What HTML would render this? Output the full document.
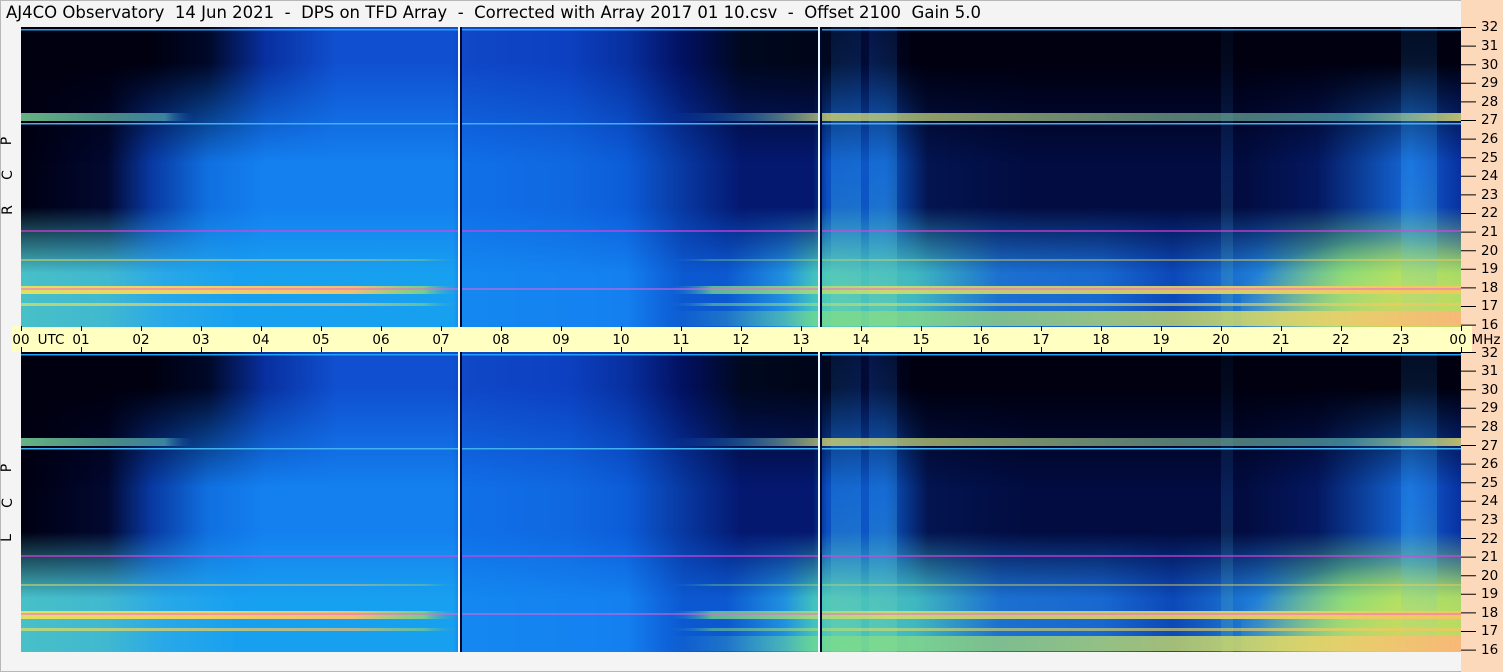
<!DOCTYPE html>
<html><head><meta charset="utf-8"><style>
html,body{margin:0;padding:0}
body{width:1503px;height:672px;overflow:hidden;background:#f4f4f4;position:relative;font-family:"DejaVu Sans","Liberation Sans",sans-serif}
#frame{position:absolute;left:0;top:0;width:1501px;height:670px;border:1px solid #b8b8b8}
#title{position:absolute;left:6px;top:3px;font-size:16.5px;color:#000;white-space:pre;letter-spacing:0}
#peach{position:absolute;left:1461px;top:0;width:42px;height:672px;background:#fdd9bc}
#axis{position:absolute;left:12px;top:326px;width:1460px;height:26px;background:#ffffc2}
.hl{position:absolute;top:332px;font-size:13.5px;color:#000;transform:translateX(-50%)}
.fl{position:absolute;left:1481px;font-size:13.5px;color:#000;transform:translateY(-50%)}
.side{position:absolute;left:3px;font-size:14px;color:#000;transform:rotate(-90deg);transform-origin:center}
svg{position:absolute;left:0;top:0}
</style></head><body>
<div id="frame"></div>
<div id="peach"></div>
<div id="axis"></div>
<div id="title">AJ4CO Observatory  14 Jun 2021  -  DPS on TFD Array  -  Corrected with Array 2017 01 10.csv  -  Offset 2100  Gain 5.0</div>
<svg width="1503" height="672" viewBox="0 0 1503 672">
<defs>
<linearGradient id="gb" x1="0" x2="1" y1="0" y2="0">
<stop offset="0" stop-color="#48c0c8"/><stop offset="0.06" stop-color="#40b8d0"/><stop offset="0.1" stop-color="#28a8e8"/>
<stop offset="0.15" stop-color="#18a0f0"/><stop offset="0.3" stop-color="#18a0f0"/><stop offset="0.305" stop-color="#1488f0"/>
<stop offset="0.42" stop-color="#1480f0"/><stop offset="0.46" stop-color="#0c58d0"/><stop offset="0.49" stop-color="#0c58d0"/>
<stop offset="0.53" stop-color="#2090e0"/><stop offset="0.55" stop-color="#40c0c0"/><stop offset="0.56" stop-color="#50c8b8"/>
<stop offset="0.62" stop-color="#40b8c0"/><stop offset="0.68" stop-color="#1c70d0"/><stop offset="0.75" stop-color="#1868d0"/>
<stop offset="0.8" stop-color="#0c48b8"/><stop offset="0.86" stop-color="#2080d8"/><stop offset="0.92" stop-color="#70d880"/>
<stop offset="0.96" stop-color="#a0e060"/><stop offset="1" stop-color="#98d868"/>
</linearGradient>
<linearGradient id="gm" x1="0" x2="1" y1="0" y2="0">
<stop offset="0" stop-color="#000012"/><stop offset="0.06" stop-color="#020830"/><stop offset="0.09" stop-color="#0838a0"/>
<stop offset="0.13" stop-color="#1070e0"/><stop offset="0.17" stop-color="#1480f0"/><stop offset="0.3" stop-color="#1480f0"/>
<stop offset="0.305" stop-color="#1070e8"/><stop offset="0.38" stop-color="#1068e0"/><stop offset="0.42" stop-color="#0c5cd8"/>
<stop offset="0.46" stop-color="#0838a0"/><stop offset="0.5" stop-color="#041870"/><stop offset="0.55" stop-color="#041870"/>
<stop offset="0.56" stop-color="#0a50c0"/><stop offset="0.6" stop-color="#0c58c8"/><stop offset="0.63" stop-color="#031450"/>
<stop offset="0.7" stop-color="#020c40"/><stop offset="0.85" stop-color="#020c40"/><stop offset="0.9" stop-color="#041860"/>
<stop offset="0.965" stop-color="#1468d8"/><stop offset="1" stop-color="#0830a0"/>
</linearGradient>
<linearGradient id="gt" x1="0" x2="1" y1="0" y2="0">
<stop offset="0" stop-color="#000010"/><stop offset="0.09" stop-color="#000010"/><stop offset="0.13" stop-color="#000828"/>
<stop offset="0.17" stop-color="#0830a0"/><stop offset="0.22" stop-color="#1050d0"/><stop offset="0.3" stop-color="#1050d0"/>
<stop offset="0.305" stop-color="#1048c8"/><stop offset="0.38" stop-color="#0c40c0"/><stop offset="0.42" stop-color="#0830a0"/>
<stop offset="0.46" stop-color="#021060"/><stop offset="0.5" stop-color="#000820"/><stop offset="0.55" stop-color="#000618"/>
<stop offset="0.59" stop-color="#020a38"/><stop offset="0.62" stop-color="#000010"/><stop offset="1" stop-color="#000010"/>
</linearGradient>
<linearGradient id="vm" x1="0" x2="0" y1="0" y2="1">
<stop offset="0" stop-color="#fff"/><stop offset="0.6" stop-color="#fff"/><stop offset="0.82" stop-color="#000"/>
</linearGradient>
<linearGradient id="vt" x1="0" x2="0" y1="0" y2="1">
<stop offset="0" stop-color="#fff"/><stop offset="0.12" stop-color="#fff"/><stop offset="0.45" stop-color="#000"/>
</linearGradient>
<mask id="mm"><rect width="1440" height="300" fill="url(#vm)"/></mask>
<mask id="mt"><rect width="1440" height="300" fill="url(#vt)"/></mask>
<linearGradient id="s27" x1="0" x2="1">
<stop offset="0" stop-color="#80e0a0" stop-opacity="0.8"/><stop offset="0.1" stop-color="#60c0c0" stop-opacity="0.6"/><stop offset="0.12" stop-color="#1060d0" stop-opacity="0"/>
<stop offset="0.45" stop-color="#1060d0" stop-opacity="0"/><stop offset="0.5" stop-color="#40a0e0" stop-opacity="0.4"/>
<stop offset="0.56" stop-color="#e0e070" stop-opacity="0.75"/><stop offset="0.8" stop-color="#90c8a0" stop-opacity="0.6"/><stop offset="0.92" stop-color="#60c0c0" stop-opacity="0.6"/><stop offset="1" stop-color="#e8e070" stop-opacity="0.8"/>
</linearGradient>
<linearGradient id="s18" x1="0" x2="1">
<stop offset="0" stop-color="#e0e060"/><stop offset="0.13" stop-color="#f0d060"/><stop offset="0.23" stop-color="#f0c070"/><stop offset="0.28" stop-color="#a0e060" stop-opacity="0.7"/>
<stop offset="0.31" stop-color="#1080f0" stop-opacity="0"/><stop offset="0.45" stop-color="#1080f0" stop-opacity="0"/><stop offset="0.48" stop-color="#80e080" stop-opacity="0.7"/>
<stop offset="0.6" stop-color="#e0e060" stop-opacity="0.8"/><stop offset="1" stop-color="#f0c860"/>
</linearGradient>
<linearGradient id="s16" x1="0" x2="1">
<stop offset="0" stop-color="#40c0d0" stop-opacity="0"/><stop offset="0.45" stop-color="#40c0d0" stop-opacity="0"/><stop offset="0.55" stop-color="#80e080" stop-opacity="0.6"/>
<stop offset="0.85" stop-color="#e0e060" stop-opacity="0.8"/><stop offset="1" stop-color="#f8b878"/>
</linearGradient>
<linearGradient id="col" x1="0" x2="0" y1="0" y2="1">
<stop offset="0" stop-color="#2080e0" stop-opacity="0.1"/><stop offset="0.5" stop-color="#30a0f0" stop-opacity="0.3"/><stop offset="1" stop-color="#80e0a0" stop-opacity="0.35"/>
</linearGradient>
<radialGradient id="yb" cx="0.7" cy="1" r="0.8">
<stop offset="0" stop-color="#f0c860" stop-opacity="0.7"/><stop offset="0.5" stop-color="#e0e060" stop-opacity="0.4"/><stop offset="1" stop-color="#e0e060" stop-opacity="0"/>
</radialGradient>
<g id="p">
<rect width="1440" height="300" fill="url(#gb)"/>
<rect width="1440" height="300" fill="url(#gm)" mask="url(#mm)"/>
<rect width="1440" height="300" fill="url(#gt)" mask="url(#mt)"/>
<rect x="810" width="30" height="300" fill="url(#col)"/>
<rect x="848" width="28" height="300" fill="url(#col)"/>
<rect x="1380" width="36" height="300" fill="url(#col)"/>
<rect x="1200" y="0" width="12" height="300" fill="url(#col)" opacity="0.5"/>
<rect x="0" y="2" width="1440" height="1.5" fill="#20a0f0"/>
<rect x="0" y="86" width="1440" height="8" fill="url(#s27)"/>
<rect x="0" y="96" width="1440" height="1.5" fill="#40b0f0"/>
<rect x="0" y="203" width="1440" height="2" fill="#e040e0" opacity="0.6"/>
<rect x="1220" y="190" width="220" height="110" fill="url(#yb)"/>
<rect x="0" y="259" width="1440" height="8" fill="url(#s18)"/>
<rect x="0" y="261" width="1440" height="2" fill="#f060e0" opacity="0.5"/>
<rect x="0" y="276" width="1440" height="3" fill="url(#s18)" opacity="0.7"/>
<rect x="0" y="284" width="1440" height="15" fill="url(#s16)"/>
<rect x="0" y="232" width="1440" height="2" fill="url(#s18)" opacity="0.5"/>
<rect x="437" width="2" height="300" fill="#f0f8ff"/>
<rect x="439" width="2" height="300" fill="#000830"/>
<rect x="797" width="2" height="300" fill="#e8f8ff"/>
<rect x="799" width="2" height="300" fill="#000830"/>
</g>
</defs>
<use href="#p" x="21" y="27"/>
<use href="#p" x="21" y="352"/>
<g stroke="#000" stroke-width="1">
<path d="M21.5 326v5M81.5 326v5M141.5 326v5M201.5 326v5M261.5 326v5M321.5 326v5M381.5 326v5M441.5 326v5M501.5 326v5M561.5 326v5M621.5 326v5M681.5 326v5M741.5 326v5M801.5 326v5M861.5 326v5M921.5 326v5M981.5 326v5M1041.5 326v5M1101.5 326v5M1161.5 326v5M1221.5 326v5M1281.5 326v5M1341.5 326v5M1401.5 326v5M1461.5 326v5"/>
<path d="M21.5 347v5M81.5 347v5M141.5 347v5M201.5 347v5M261.5 347v5M321.5 347v5M381.5 347v5M441.5 347v5M501.5 347v5M561.5 347v5M621.5 347v5M681.5 347v5M741.5 347v5M801.5 347v5M861.5 347v5M921.5 347v5M981.5 347v5M1041.5 347v5M1101.5 347v5M1161.5 347v5M1221.5 347v5M1281.5 347v5M1341.5 347v5M1401.5 347v5M1461.5 347v5"/>
<path d="M1461 27.5h15M1461 46.1h15M1461 64.7h15M1461 83.3h15M1461 101.9h15M1461 120.5h15M1461 139.1h15M1461 157.7h15M1461 176.3h15M1461 194.9h15M1461 213.5h15M1461 232.1h15M1461 250.7h15M1461 269.3h15M1461 287.9h15M1461 306.5h15M1461 325.1h15"/>
<path d="M1461 352.5h15M1461 371.1h15M1461 389.7h15M1461 408.3h15M1461 426.9h15M1461 445.5h15M1461 464.1h15M1461 482.7h15M1461 501.3h15M1461 519.9h15M1461 538.5h15M1461 557.1h15M1461 575.7h15M1461 594.3h15M1461 612.9h15M1461 631.5h15M1461 650.1h15"/>
</g>
</svg>
<div class="hl" style="left:21px">00</div><div class="hl" style="left:51px">UTC</div>
<div class="hl" style="left:81px">01</div><div class="hl" style="left:141px">02</div><div class="hl" style="left:201px">03</div><div class="hl" style="left:261px">04</div><div class="hl" style="left:321px">05</div><div class="hl" style="left:381px">06</div><div class="hl" style="left:441px">07</div><div class="hl" style="left:501px">08</div><div class="hl" style="left:561px">09</div><div class="hl" style="left:621px">10</div><div class="hl" style="left:681px">11</div><div class="hl" style="left:741px">12</div><div class="hl" style="left:801px">13</div><div class="hl" style="left:861px">14</div><div class="hl" style="left:921px">15</div><div class="hl" style="left:981px">16</div><div class="hl" style="left:1041px">17</div><div class="hl" style="left:1101px">18</div><div class="hl" style="left:1161px">19</div><div class="hl" style="left:1221px">20</div><div class="hl" style="left:1281px">21</div><div class="hl" style="left:1341px">22</div><div class="hl" style="left:1401px">23</div><div class="hl" style="left:1458px">00</div>
<div class="hl" style="left:1486px">MHz</div>
<div class="fl" style="top:27px">32</div><div class="fl" style="top:46px">31</div><div class="fl" style="top:65px">30</div><div class="fl" style="top:83px">29</div><div class="fl" style="top:102px">28</div><div class="fl" style="top:120px">27</div><div class="fl" style="top:139px">26</div><div class="fl" style="top:158px">25</div><div class="fl" style="top:176px">24</div><div class="fl" style="top:195px">23</div><div class="fl" style="top:213px">22</div><div class="fl" style="top:232px">21</div><div class="fl" style="top:251px">20</div><div class="fl" style="top:269px">19</div><div class="fl" style="top:288px">18</div><div class="fl" style="top:306px">17</div><div class="fl" style="top:325px">16</div>
<div class="fl" style="top:353px">32</div><div class="fl" style="top:371px">31</div><div class="fl" style="top:390px">30</div><div class="fl" style="top:408px">29</div><div class="fl" style="top:427px">28</div><div class="fl" style="top:446px">27</div><div class="fl" style="top:464px">26</div><div class="fl" style="top:483px">25</div><div class="fl" style="top:501px">24</div><div class="fl" style="top:520px">23</div><div class="fl" style="top:539px">22</div><div class="fl" style="top:557px">21</div><div class="fl" style="top:576px">20</div><div class="fl" style="top:594px">19</div><div class="fl" style="top:613px">18</div><div class="fl" style="top:631px">17</div><div class="fl" style="top:650px">16</div>
<div class="side" style="top:133px">P</div><div class="side" style="top:167px">C</div><div class="side" style="top:202px">R</div>
<div class="side" style="top:460px">P</div><div class="side" style="top:495px">C</div><div class="side" style="top:530px">L</div>
</body></html>
